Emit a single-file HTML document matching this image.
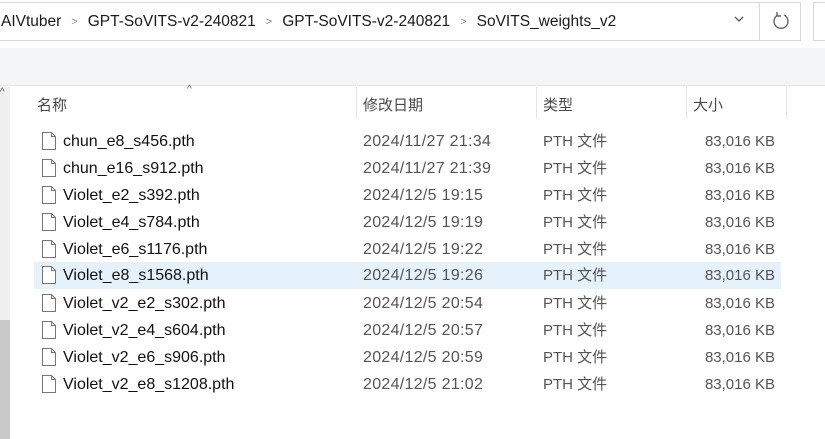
<!DOCTYPE html>
<html><head><meta charset="utf-8"><style>
*{margin:0;padding:0;box-sizing:border-box}
body{width:825px;height:439px;overflow:hidden;background:#fff;font-family:"Liberation Sans","Noto Sans CJK SC",sans-serif;position:relative;color:#1a1a1a}
.addr{position:absolute;left:-2px;top:2px;width:803px;height:39px;border:1px solid #d9d9d9;background:#fff}
.crumb{position:absolute;left:2px;top:10px;font-size:15.5px;color:#1a1a1a;white-space:nowrap}
.crumb .s{color:#888;font-size:11px;margin:0 10px;position:relative;top:-1px}
.dd{position:absolute;left:733px;top:13px}
.div{position:absolute;left:759px;top:2px;width:1px;height:39px;background:#d9d9d9}
.ref{position:absolute;left:771px;top:10px}
.search{position:absolute;left:813px;top:2px;width:20px;height:39px;border:1px solid #d9d9d9}
.band{position:absolute;left:0;top:48px;width:825px;height:38px;background:#f4f5f7;border-bottom:1px solid #e4e4e4}
.sb{position:absolute;left:0;top:87px;width:10px;height:352px;background:#f0f0f0}
.sb2{position:absolute;left:0;top:320px;width:10px;height:119px;background:#c9c9c9}
.sb .a{position:absolute;left:0;top:0;font-size:10px;color:#555}
.hdr{position:absolute;top:94px;font-size:15px;color:#4a4a4a}
.hl{position:absolute;top:87px;width:1px;height:32px;background:#e6e6e6}
.sort{position:absolute;left:187px;top:84px;font-size:10px;color:#666}
.row{position:absolute;left:34px;width:747px;height:27px;font-size:16px}
.row.sel{background:#e5f1fb}
.row span{position:absolute;top:4px;height:20px;line-height:20px;white-space:nowrap}
.n{left:29px;color:#111}
.d{left:329px;color:#555;letter-spacing:0.3px}
.t{left:509px;color:#555;font-size:15px}
.z{right:6px;color:#555;font-size:15px}
.ic{position:absolute;left:8px;top:4px}
</style></head><body>
<div class="addr">
<div class="crumb">AIVtuber<span class="s">&gt;</span>GPT-SoVITS-v2-240821<span class="s">&gt;</span>GPT-SoVITS-v2-240821<span class="s">&gt;</span>SoVITS_weights_v2</div>
</div>
<svg class="dd" width="12" height="12" viewBox="0 0 12 12"><path d="M2 4l4 4 4-4" fill="none" stroke="#555" stroke-width="1.3"/></svg>
<div class="div"></div>
<svg class="ref" width="20" height="22" viewBox="0 0 20 22"><path d="M7 5 A7 7 0 1 0 13 5" fill="none" stroke="#666" stroke-width="1.4"/><path d="M6 2v4h4" fill="none" stroke="#666" stroke-width="1.4"/></svg>
<div class="search"></div>
<div class="band"></div>
<div class="sb"><span class="a">^</span></div>
<div class="sb2"></div>
<div class="sort">^</div>
<div class="hdr" style="left:37px">名称</div>
<div class="hl" style="left:356px"></div>
<div class="hdr" style="left:363px">修改日期</div>
<div class="hl" style="left:536px"></div>
<div class="hdr" style="left:543px">类型</div>
<div class="hl" style="left:686px"></div>
<div class="hdr" style="left:693px">大小</div>
<div class="hl" style="left:786px"></div>

<div class="row" style="top:128px"><svg class="ic" width="14" height="18" viewBox="0 0 14 18"><path d="M0.5 0.5h9l4 4v13h-13z" fill="#fff" stroke="#777"/><path d="M9.5 0.5v4h4" fill="none" stroke="#777"/></svg><span class="n">chun_e8_s456.pth</span><span class="d">2024/11/27 21:34</span><span class="t">PTH 文件</span><span class="z">83,016 KB</span></div>
<div class="row" style="top:155px"><svg class="ic" width="14" height="18" viewBox="0 0 14 18"><path d="M0.5 0.5h9l4 4v13h-13z" fill="#fff" stroke="#777"/><path d="M9.5 0.5v4h4" fill="none" stroke="#777"/></svg><span class="n">chun_e16_s912.pth</span><span class="d">2024/11/27 21:39</span><span class="t">PTH 文件</span><span class="z">83,016 KB</span></div>
<div class="row" style="top:182px"><svg class="ic" width="14" height="18" viewBox="0 0 14 18"><path d="M0.5 0.5h9l4 4v13h-13z" fill="#fff" stroke="#777"/><path d="M9.5 0.5v4h4" fill="none" stroke="#777"/></svg><span class="n">Violet_e2_s392.pth</span><span class="d">2024/12/5 19:15</span><span class="t">PTH 文件</span><span class="z">83,016 KB</span></div>
<div class="row" style="top:209px"><svg class="ic" width="14" height="18" viewBox="0 0 14 18"><path d="M0.5 0.5h9l4 4v13h-13z" fill="#fff" stroke="#777"/><path d="M9.5 0.5v4h4" fill="none" stroke="#777"/></svg><span class="n">Violet_e4_s784.pth</span><span class="d">2024/12/5 19:19</span><span class="t">PTH 文件</span><span class="z">83,016 KB</span></div>
<div class="row" style="top:236px"><svg class="ic" width="14" height="18" viewBox="0 0 14 18"><path d="M0.5 0.5h9l4 4v13h-13z" fill="#fff" stroke="#777"/><path d="M9.5 0.5v4h4" fill="none" stroke="#777"/></svg><span class="n">Violet_e6_s1176.pth</span><span class="d">2024/12/5 19:22</span><span class="t">PTH 文件</span><span class="z">83,016 KB</span></div>
<div class="row sel" style="top:262px"><svg class="ic" width="14" height="18" viewBox="0 0 14 18"><path d="M0.5 0.5h9l4 4v13h-13z" fill="#fff" stroke="#777"/><path d="M9.5 0.5v4h4" fill="none" stroke="#777"/></svg><span class="n">Violet_e8_s1568.pth</span><span class="d">2024/12/5 19:26</span><span class="t">PTH 文件</span><span class="z">83,016 KB</span></div>
<div class="row" style="top:290px"><svg class="ic" width="14" height="18" viewBox="0 0 14 18"><path d="M0.5 0.5h9l4 4v13h-13z" fill="#fff" stroke="#777"/><path d="M9.5 0.5v4h4" fill="none" stroke="#777"/></svg><span class="n">Violet_v2_e2_s302.pth</span><span class="d">2024/12/5 20:54</span><span class="t">PTH 文件</span><span class="z">83,016 KB</span></div>
<div class="row" style="top:317px"><svg class="ic" width="14" height="18" viewBox="0 0 14 18"><path d="M0.5 0.5h9l4 4v13h-13z" fill="#fff" stroke="#777"/><path d="M9.5 0.5v4h4" fill="none" stroke="#777"/></svg><span class="n">Violet_v2_e4_s604.pth</span><span class="d">2024/12/5 20:57</span><span class="t">PTH 文件</span><span class="z">83,016 KB</span></div>
<div class="row" style="top:344px"><svg class="ic" width="14" height="18" viewBox="0 0 14 18"><path d="M0.5 0.5h9l4 4v13h-13z" fill="#fff" stroke="#777"/><path d="M9.5 0.5v4h4" fill="none" stroke="#777"/></svg><span class="n">Violet_v2_e6_s906.pth</span><span class="d">2024/12/5 20:59</span><span class="t">PTH 文件</span><span class="z">83,016 KB</span></div>
<div class="row" style="top:371px"><svg class="ic" width="14" height="18" viewBox="0 0 14 18"><path d="M0.5 0.5h9l4 4v13h-13z" fill="#fff" stroke="#777"/><path d="M9.5 0.5v4h4" fill="none" stroke="#777"/></svg><span class="n">Violet_v2_e8_s1208.pth</span><span class="d">2024/12/5 21:02</span><span class="t">PTH 文件</span><span class="z">83,016 KB</span></div>
</body></html>
